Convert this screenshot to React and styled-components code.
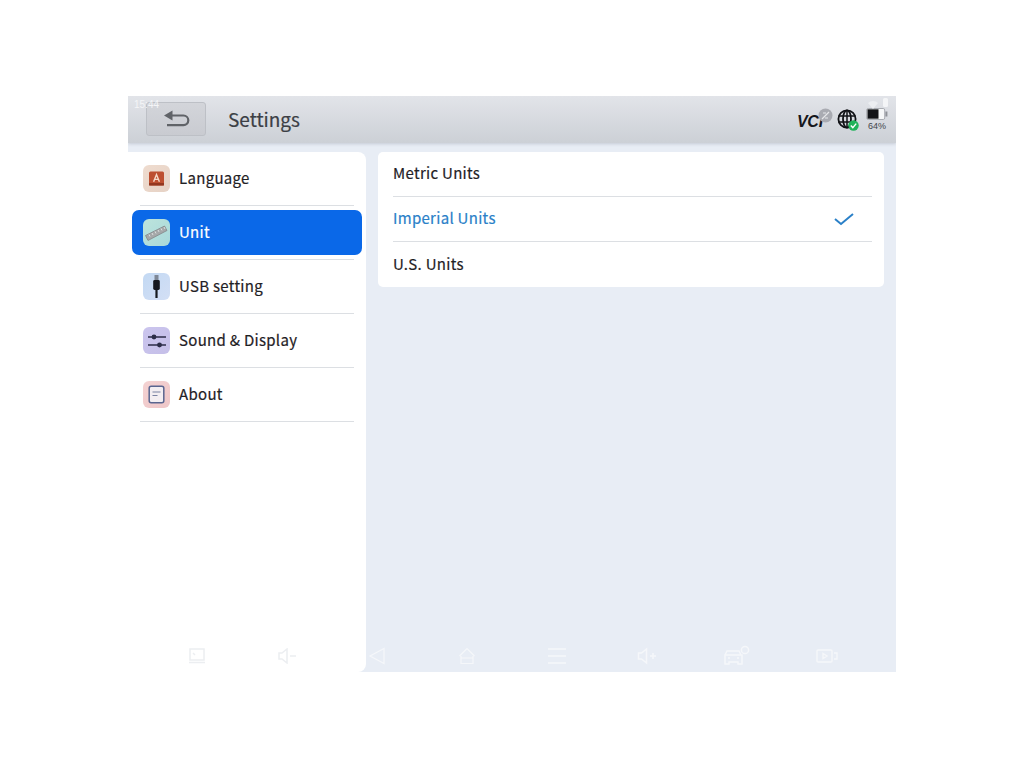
import React from 'react'
import styled, { createGlobalStyle } from 'styled-components'

const GlobalStyle = createGlobalStyle`
    html, body {
        margin: 0;
        background: #fff;
        font-family: "Noto Sans CJK SC", "Noto Sans", sans-serif;
    }
`

const Page = styled.div`
    width: 1024px;
    height: 768px;
    display: flex;
    align-items: center;
    justify-content: center;
`

const Screen = styled.div`
    position: relative;
    width: 768px;
    height: 576px;
    display: flex;
    flex-direction: column;
    background: #e8edf5;
    overflow: hidden;
`

const Header = styled.header`
    position: relative;
    z-index: 1;
    height: 47px;
    margin-bottom: 1px;
    flex: none;
    box-sizing: border-box;
    display: flex;
    align-items: center;
    padding: 0 7px 2px 18px;
    background: linear-gradient(#e2e4e9, #ccd0d6);
    box-shadow: 0 1px 3px rgba(120, 126, 140, 0.3);
`

const Clock = styled.span`
    position: absolute;
    left: 6px;
    top: 2px;
    font-family: "Liberation Sans", sans-serif;
    font-size: 10px;
    line-height: 14px;
    color: #f4f5f7;
`

const BackButton = styled.button`
    width: 60px;
    height: 34px;
    padding: 0;
    display: flex;
    align-items: center;
    justify-content: center;
    box-sizing: border-box;
    border: 1px solid #bdc0c6;
    border-radius: 3px;
    background: linear-gradient(#d3d5da, #c9cbd1);
`

const Title = styled.h1`
    margin: 0 0 0 22px;
    font-size: 19px;
    line-height: 28px;
    font-weight: 400;
    color: #3c3f45;
    -webkit-text-stroke: 0.2px #3c3f45;
`

const StatusArea = styled.div`
    position: relative;
    margin-left: auto;
    display: flex;
    align-items: center;
`

const VciWrap = styled.div`
    position: relative;
    width: 36px;
    height: 20px;
    margin-right: 4px;
`

const VciText = styled.span`
    position: absolute;
    left: 0;
    top: 4px;
    font-family: "Liberation Sans", sans-serif;
    font-style: italic;
    font-weight: 700;
    font-size: 16px;
    line-height: 18px;
    letter-spacing: -0.3px;
    color: #15171c;
`

const VciBadge = styled.svg`
    position: absolute;
    right: 0;
    top: -1px;
`

const GlobeWrap = styled.div`
    position: relative;
    width: 22px;
    height: 22px;
    margin: 3px 6px 0 0;
`

const BatteryBlock = styled.div`
    position: relative;
    width: 24px;
    height: 38px;
    box-sizing: border-box;
    padding-top: 7px;
    display: flex;
    flex-direction: column;
    align-items: center;
`

const BatteryText = styled.span`
    font-family: "Liberation Sans", sans-serif;
    font-size: 9px;
    line-height: 11px;
    color: #42454a;
`

const Body = styled.main`
    flex: 1;
    min-height: 0;
    display: flex;
    padding-top: 8px;
`

const Sidebar = styled.nav`
    width: 238px;
    flex: none;
    box-sizing: border-box;
    padding: 0 12px;
    background: #fff;
    border-radius: 0 8px 8px 0;
`

const SideRow = styled.div`
    height: 54px;
    box-sizing: border-box;
    padding: 4px 0;
    border-bottom: 1px solid #dcdfe3;
`

const SideItem = styled.div`
    height: 45px;
    margin: 0 -8px;
    padding-left: 11px;
    display: flex;
    align-items: center;
    gap: 9px;
    border-radius: 7px;
    background: ${props => (props.$active ? '#0a68e8' : 'transparent')};
    color: ${props => (props.$active ? '#fff' : '#1f2125')};
    font-size: 15px;
    font-weight: 400;
    line-height: 18px;
    letter-spacing: 0.3px;
    -webkit-text-stroke: 0.2px currentColor;
`

const ItemLabel = styled.span`
    margin-bottom: 2px;
`

const IconTile = styled.span`
    width: 27px;
    height: 27px;
    flex: none;
    display: flex;
    align-items: center;
    justify-content: center;
    border-radius: 6px;
    background: ${props => props.$bg};
`

const Content = styled.section`
    flex: 1;
    padding: 0 12px;
`

const Card = styled.div`
    background: #fff;
    border-radius: 5px;
    padding: 0 12px 0 15px;
`

const UnitRow = styled.div`
    height: 45px;
    box-sizing: border-box;
    display: flex;
    align-items: center;
    justify-content: space-between;
    padding-right: 18px;
    border-bottom: ${props => (props.$last ? 'none' : '1px solid #dcdfe3')};
    color: ${props => (props.$active ? '#2a80c8' : '#1f2125')};
    font-size: 15px;
    font-weight: 400;
    line-height: 18px;
    letter-spacing: 0.3px;
    -webkit-text-stroke: 0.2px currentColor;
`

const NavBar = styled.div`
    position: absolute;
    left: 24px;
    right: 24px;
    bottom: 0;
    height: 32px;
    display: grid;
    grid-template-columns: repeat(8, 90px);
`

const NavSlot = styled.div`
    display: flex;
    align-items: center;
    justify-content: center;
    color: ${props => (props.$onWhite ? '#eceef1' : '#f5f7fa')};
`

const LanguageIcon = () => (
    <svg width="17" height="17" viewBox="0 0 17 17">
        <rect x="1" y="1.5" width="15" height="14" rx="1.5" fill="#bd4f30" />
        <rect x="1" y="13" width="15" height="2.5" fill="#93371f" />
        <path d="M5.6 11.8 8.5 4.6l2.9 7.2M6.7 9.4h3.6" fill="none" stroke="#f6d9c8" strokeWidth="1.4" />
    </svg>
)

const RulerIcon = () => (
    <svg width="25" height="25" viewBox="0 0 25 25">
        <path d="M1.5 15.5 20.5 6l2.5 4.5L4 20.5z" fill="#a5a8a9" stroke="#7d8083" strokeWidth="0.7" />
        <path d="M5 14.5l1 2M8 13l1 2M11 11.4l1 2M14 9.9l1 2M17 8.4l1 2M20 7l1 2" stroke="#e3e6e6" strokeWidth="0.9" />
    </svg>
)

const UsbIcon = () => (
    <svg width="13" height="25" viewBox="0 0 13 25">
        <rect x="4.5" y="1" width="4" height="5" fill="#7e8796" />
        <rect x="3.2" y="6" width="6.6" height="10" rx="1.4" fill="#15181e" />
        <rect x="5.4" y="15" width="2.2" height="9" fill="#15181e" />
    </svg>
)

const SlidersIcon = () => (
    <svg width="20" height="16" viewBox="0 0 20 16">
        <path d="M1 4h18M1 12h18" stroke="#2c2d48" strokeWidth="1.7" />
        <circle cx="7" cy="4" r="2.4" fill="#2c2d48" />
        <circle cx="12.5" cy="12" r="2.4" fill="#2c2d48" />
    </svg>
)

const AboutIcon = () => (
    <svg width="17" height="19" viewBox="0 0 17 19">
        <rect x="1.2" y="1.2" width="14.6" height="16.6" rx="2" fill="#f3eef2" stroke="#5a6590" strokeWidth="1.5" />
        <path d="M4.5 7h8M4.5 10.5h5" stroke="#7a82a2" strokeWidth="1.2" />
    </svg>
)

const BackArrow = () => (
    <svg width="28" height="20" viewBox="0 0 28 20">
        <path d="M2 6.5 10.5 1.5v10z" fill="#606368" />
        <path d="M10 6.5h11.5a4.8 4.8 0 0 1 0 9.6H5" fill="none" stroke="#606368" strokeWidth="2.2" />
    </svg>
)

const Globe = () => (
    <svg width="20" height="20" viewBox="0 0 20 20" fill="none" stroke="#101216" strokeWidth="1.8">
        <circle cx="10" cy="10" r="8.6" />
        <ellipse cx="10" cy="10" rx="4" ry="8.6" />
        <path d="M1.5 7h17M1.5 13h17M10 1.4v17.2" strokeWidth="1.5" />
    </svg>
)

const GreenCheck = styled.svg`
    position: absolute;
    right: 0;
    bottom: 0;
`

const Battery = () => (
    <svg width="22" height="14" viewBox="0 0 22 14">
        <rect x="0.7" y="1.5" width="18" height="11" rx="1.5" fill="#f6f7f8" stroke="#a9acb2" />
        <rect x="1.5" y="2.3" width="11" height="9.4" fill="#131417" />
        <rect x="19.4" y="4.5" width="2" height="5" fill="#8f9298" />
    </svg>
)

const StatusGhost = styled.svg`
    position: absolute;
    top: -2px;
    right: 0;
`

const navIcons = [
    <svg key="a" width="18" height="16" viewBox="0 0 18 16" fill="none" stroke="currentColor" strokeWidth="1.5">
        <rect x="2" y="1" width="14" height="11" />
        <path d="M1 14.5h16M5 5l2 2" />
    </svg>,
    <svg key="b" width="20" height="16" viewBox="0 0 20 16" fill="none" stroke="currentColor" strokeWidth="1.5">
        <path d="M2 5h3l5-4v14l-5-4H2zM13 8h6" />
    </svg>,
    <svg key="c" width="18" height="18" viewBox="0 0 18 18" fill="none" stroke="currentColor" strokeWidth="1.2">
        <path d="M16 1.5v15L2 9z" />
    </svg>,
    <svg key="d" width="18" height="18" viewBox="0 0 18 18" fill="none" stroke="currentColor" strokeWidth="1.2">
        <path d="M1.5 9 9 1.5 16.5 9M3 9v7.5h12V9M3 11h12" />
    </svg>,
    <svg key="e" width="20" height="18" viewBox="0 0 20 18" fill="none" stroke="currentColor" strokeWidth="1.6">
        <path d="M1 2h18M1 9h18M1 16h18" />
    </svg>,
    <svg key="f" width="20" height="18" viewBox="0 0 20 18" fill="none" stroke="currentColor" strokeWidth="1.5">
        <path d="M1.5 6h3l5-4v14l-5-4h-3zM13 9h6M16 6v6" />
    </svg>,
    <svg key="g" width="28" height="22" viewBox="0 0 28 22" fill="none" stroke="currentColor" strokeWidth="1.5">
        <path d="M2 10 4 6h12l2 4M2 10v9h4v-2h9v2h4v-9zM2 10h17M5 13h2M14 13h2" />
        <circle cx="22" cy="5" r="3.6" />
    </svg>,
    <svg key="h" width="22" height="14" viewBox="0 0 22 14" fill="none" stroke="currentColor" strokeWidth="1.4">
        <rect x="1" y="1" width="15" height="12" rx="1" />
        <path d="M7 4.5v5l4-2.5zM18 4h3v6h-3" />
    </svg>,
]

const menu = [
    { name: 'Language', bg: 'linear-gradient(135deg, #efdccf, #e6d2c5)', icon: <LanguageIcon /> },
    { name: 'Unit', bg: 'linear-gradient(135deg, #bde4dc, #a8d8da)', icon: <RulerIcon />, active: true },
    { name: 'USB setting', bg: 'linear-gradient(135deg, #c3d9f3, #d3dff5)', icon: <UsbIcon /> },
    { name: 'Sound & Display', bg: 'linear-gradient(135deg, #cbc5ee, #c5bfe8)', icon: <SlidersIcon /> },
    { name: 'About', bg: 'linear-gradient(135deg, #f4d2d2, #eec6c8)', icon: <AboutIcon /> },
]

const units = ['Metric Units', 'Imperial Units', 'U.S. Units']

const App = () => (
    <Page>
        <GlobalStyle />
        <Screen>
            <Header>
                <Clock>15:44</Clock>
                <BackButton>
                    <BackArrow />
                </BackButton>
                <Title>Settings</Title>
                <StatusArea>
                    <VciWrap>
                        <VciText>VCI</VciText>
                        <VciBadge width="15" height="15" viewBox="0 0 15 15">
                            <circle cx="7.5" cy="7.5" r="7" fill="#a9abb2" />
                            <path d="M4 11 11 4M5 5h3M7 10h3" stroke="#e6e7ea" strokeWidth="1.2" />
                        </VciBadge>
                    </VciWrap>
                    <GlobeWrap>
                        <Globe />
                        <GreenCheck width="11" height="11" viewBox="0 0 11 11">
                            <circle cx="5.5" cy="5.5" r="5.2" fill="#21b35a" />
                            <path d="M2.8 5.6 4.8 7.6 8.2 3.6" fill="none" stroke="#fff" strokeWidth="1.4" />
                        </GreenCheck>
                    </GlobeWrap>
                    <BatteryBlock>
                        <StatusGhost width="24" height="12" viewBox="0 0 24 12">
                            <path d="M3 5a7 7 0 0 1 10 0L8 11z" fill="#eceef1" />
                            <rect x="18" y="0" width="5" height="9" rx="1.5" fill="#f4f5f7" />
                        </StatusGhost>
                        <Battery />
                        <BatteryText>64%</BatteryText>
                    </BatteryBlock>
                </StatusArea>
            </Header>
            <Body>
                <Sidebar>
                    {menu.map(item => (
                        <SideRow key={item.name}>
                            <SideItem $active={item.active}>
                                <IconTile $bg={item.bg}>{item.icon}</IconTile>
                                <ItemLabel>{item.name}</ItemLabel>
                            </SideItem>
                        </SideRow>
                    ))}
                </Sidebar>
                <Content>
                    <Card>
                        {units.map((unit, index) => (
                            <UnitRow
                                key={unit}
                                $active={index === 1}
                                $last={index === units.length - 1}
                            >
                                <ItemLabel>{unit}</ItemLabel>
                                {index === 1 && (
                                    <svg width="20" height="14" viewBox="0 0 20 14" fill="none" stroke="#2a80c8" strokeWidth="2">
                                        <path d="M1 7l6 5L19 2" />
                                    </svg>
                                )}
                            </UnitRow>
                        ))}
                    </Card>
                </Content>
            </Body>
            <NavBar>
                {navIcons.map((icon, index) => (
                    <NavSlot key={index} $onWhite={index < 2}>
                        {icon}
                    </NavSlot>
                ))}
            </NavBar>
        </Screen>
    </Page>
)

export default App
